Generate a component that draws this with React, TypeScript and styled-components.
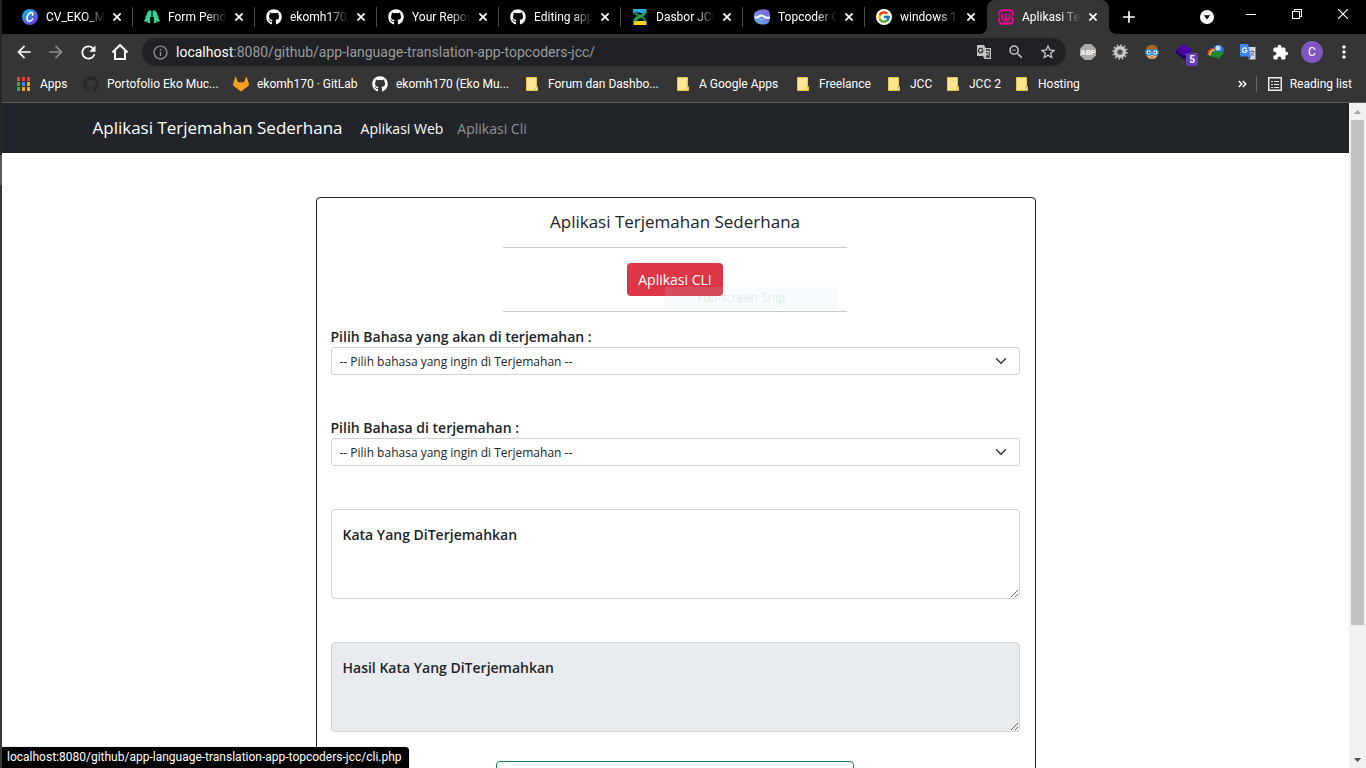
import React from 'react';
import styled, { createGlobalStyle, css } from 'styled-components';
import {
  MdArrowBack,
  MdArrowForward,
  MdRefresh,
  MdInfoOutline,
  MdZoomOut,
  MdStarBorder,
  MdExtension,
  MdMoreVert,
  MdAdd,
} from 'react-icons/md';
import { FaGithub } from 'react-icons/fa';
import { FcGoogle } from 'react-icons/fc';

const pageFont = '"Open Sans", "Noto Sans", sans-serif';
const chromeFont = 'Roboto, "Open Sans", sans-serif';

const GlobalStyle = createGlobalStyle`
  *, *::before, *::after { box-sizing: border-box; }
  html, body { margin: 0; background: #1c1c1c; }
  body { font-family: ${chromeFont}; font-size: 14px; color: #212529; }
  button, select, textarea, input { font-family: inherit; }
`;

/* ---------- window frame ---------- */

const Desktop = styled.div`
  display: flex;
  height: 100vh;
  padding-left: 2px;
  overflow: hidden;
  background: linear-gradient(#262524 0 155px, #5a5a5a 155px 185px, #383838 185px 100%);
`;

const Browser = styled.div`
  position: relative;
  flex: 1;
  min-width: 0;
  display: flex;
  flex-direction: column;
  background: #353535;
`;

const IconButton = styled.button<{ $w?: number; $dim?: boolean }>`
  width: ${(p) => p.$w ?? 32}px;
  flex: none;
  align-self: stretch;
  display: flex;
  align-items: center;
  justify-content: center;
  padding: 0;
  border: 0;
  background: none;
  color: ${(p) => (p.$dim ? '#8c8c8c' : '#fff')};
`;

/* ---------- tab strip ---------- */

const TabStrip = styled.div`
  display: flex;
  height: 34px;
  padding-left: 9px;
  background: #000;
`;

const Tabs = styled.div`
  display: flex;
  flex: 0 1 auto;
  min-width: 0;
`;

const Tab = styled.div<{ $active?: boolean; $divided?: boolean }>`
  position: relative;
  flex: 0 1 122px;
  width: 122px;
  min-width: 0;
  display: flex;
  align-items: center;
  padding: 0 9px 0 11px;
  color: #fff;
  ${(p) =>
    p.$divided &&
    css`
      background: linear-gradient(#4a4a4a, #4a4a4a) right 0 top 7px / 1px 20px no-repeat;
    `}
  ${(p) =>
    p.$active &&
    css`
      background: #353535;
      border-radius: 8px 8px 0 0;
      &::before,
      &::after {
        content: '';
        position: absolute;
        bottom: 0;
        width: 8px;
        height: 8px;
      }
      &::before {
        left: -8px;
        background: radial-gradient(circle at 0 0, transparent 8px, #353535 8px);
      }
      &::after {
        right: -8px;
        background: radial-gradient(circle at 100% 0, transparent 8px, #353535 8px);
      }
    `}
`;

const TabIcon = styled.span`
  flex: none;
  width: 16px;
  height: 16px;
  display: flex;
`;

const TabTitle = styled.span`
  flex: 1;
  min-width: 0;
  margin-left: 8px;
  overflow: hidden;
  white-space: nowrap;
  font-size: 12px;
  line-height: 16px;
  mask-image: linear-gradient(90deg, #000 60%, transparent 92%);
`;

const TabClose = styled.button`
  flex: none;
  width: 14px;
  height: 16px;
  padding: 0;
  border: 0;
  background: none;
  color: #fff;
  display: flex;
  align-items: center;
  justify-content: center;
`;

const Caption = styled.div`
  display: flex;
  margin-left: auto;
`;

const WindowControls = styled.div`
  display: flex;
  height: 28px;
`;

/* ---------- toolbar ---------- */

const Toolbar = styled.div`
  display: flex;
  height: 36px;
  padding: 0 6px;
  align-items: center;
`;

const Omnibox = styled.div`
  flex: 1;
  min-width: 0;
  height: 28px;
  margin: 0 6px;
  padding: 0 2px;
  display: flex;
  align-items: center;
  border-radius: 14px;
  background: #202124;
`;

const Url = styled.div`
  flex: 1;
  min-width: 0;
  overflow: hidden;
  white-space: nowrap;
  font-size: 14px;
  line-height: 20px;
  color: #9a9b9d;
  b {
    font-weight: 400;
    color: #fff;
  }
`;

const Avatar = styled.span`
  width: 22px;
  height: 22px;
  border-radius: 50%;
  background: #7e57c2;
  color: #fff;
  font-size: 12px;
  line-height: 22px;
  text-align: center;
`;

const BadgeHost = styled.span`
  position: relative;
  width: 16px;
  height: 16px;
`;

const Badge = styled.span`
  position: absolute;
  left: 10px;
  top: 9px;
  width: 12px;
  height: 13px;
  border-radius: 2px;
  background: #673ab7;
  color: #fff;
  font-size: 10px;
  font-weight: 700;
  line-height: 13px;
  text-align: center;
`;

const Bookmarks = styled.div`
  display: flex;
  align-items: center;
  height: 33px;
  padding: 0 14px 5px 15px;
  border-bottom: 1px solid #606060;
`;

const Bookmark = styled.a<{ $w: number }>`
  flex: 0 1 ${(p) => p.$w}px;
  min-width: 0;
  display: flex;
  align-items: center;
  gap: 8px;
  overflow: hidden;
  color: #fff;
  font-size: 12px;
  line-height: 16px;
  white-space: nowrap;
  text-decoration: none;
  svg {
    flex: none;
  }
`;

const BookmarkTail = styled.div`
  margin-left: auto;
  display: flex;
  align-items: center;
  color: #fff;
`;

const Overflow = styled.button`
  padding: 0;
  border: 0;
  background: none;
  color: #fff;
  display: flex;
`;

const ReadingList = styled.button`
  display: flex;
  align-items: center;
  gap: 8px;
  height: 16px;
  margin-left: 9px;
  padding: 0 0 0 11px;
  border: 0;
  border-left: 1px solid #6a6a6a;
  background: none;
  color: #fff;
  font-size: 12px;
  line-height: 16px;
  white-space: nowrap;
`;

/* ---------- web page ---------- */

const Viewport = styled.div`
  flex: 1;
  min-height: 0;
  display: flex;
  background: #fff;
  font-family: ${pageFont};
`;

const Page = styled.div`
  flex: 1;
  min-width: 0;
  overflow: hidden;
`;

const Navbar = styled.nav`
  background: #212529;
`;

const NavInner = styled.div`
  display: flex;
  align-items: center;
  max-width: 1188px;
  min-height: 50px;
  margin: 0 auto;
  padding: 0 11px;
`;

const Brand = styled.a`
  margin-right: 11px;
  color: #fff;
  font-size: 17px;
  line-height: 28px;
  text-decoration: none;
  white-space: nowrap;
`;

const NavLink = styled.a<{ $active?: boolean }>`
  padding: 8px 7px 7px;
  color: ${(p) => (p.$active ? '#fff' : '#909294')};
  font-size: 14px;
  line-height: 22px;
  text-decoration: none;
  white-space: nowrap;
`;

const Card = styled.main`
  max-width: 720px;
  margin: 44px auto 0;
  padding: 14px 15px 14px 14px;
  border: 1px solid #212529;
  border-radius: 4px;
`;

const CardHead = styled.header`
  position: relative;
  width: 50%;
  margin: 0 auto;
  display: flex;
  flex-direction: column;
  align-items: center;
`;

const Heading = styled.h1`
  margin: 0;
  font-size: 17px;
  font-weight: 500;
  line-height: 20px;
  white-space: nowrap;
`;

const Rule = styled.hr`
  align-self: stretch;
  height: 1px;
  margin: 15px 0;
  border: 0;
  background: #c8c9ca;
`;

const CliLink = styled.a`
  height: 33px;
  padding: 0 11px;
  border-radius: 4px;
  background: #dc3545;
  color: #fff;
  font-size: 14px;
  line-height: 33px;
  text-decoration: none;
`;

const SnipGhost = styled.div`
  position: absolute;
  right: 9px;
  bottom: 18px;
  width: 173px;
  height: 22px;
  padding-left: 32px;
  background: rgba(190, 225, 250, 0.14);
  color: rgba(110, 80, 80, 0.14);
  font-size: 12px;
  line-height: 22px;
  pointer-events: none;
`;

const Form = styled.form`
  display: flex;
  flex-direction: column;
  gap: 43px;
`;

const Field = styled.div`
  display: flex;
  flex-direction: column;
`;

const Label = styled.label`
  font-size: 14px;
  font-weight: 600;
  line-height: 20px;
`;

const Select = styled.select`
  appearance: none;
  width: 100%;
  height: 28px;
  padding: 0 32px 0 8px;
  border: 1px solid #ced4da;
  border-radius: 3px;
  background: #fff
    url("data:image/svg+xml,%3Csvg xmlns='http://www.w3.org/2000/svg' viewBox='0 0 16 16'%3E%3Cpath fill='none' stroke='%23343a40' stroke-linecap='round' stroke-linejoin='round' stroke-width='2' d='M2 5l6 6 6-6'/%3E%3C/svg%3E")
    right 12px center / 12px 12px no-repeat;
  color: #212529;
  font-size: 12px;
`;

const Floating = styled.div`
  display: grid;
  & > * {
    grid-area: 1 / 1;
  }
  label {
    z-index: 1;
    justify-self: start;
    align-self: start;
    padding: 16px 12px;
    pointer-events: none;
  }
`;

const TextArea = styled.textarea`
  width: 100%;
  height: 90px;
  padding: 14px 11px;
  border: 1px solid #ced4da;
  border-radius: 4px;
  background: #fff;
  font-size: 14px;
  resize: vertical;
  &:disabled {
    background: #e9ecef;
  }
`;

const Submit = styled.button`
  align-self: center;
  width: 52%;
  height: 34px;
  margin-top: -14px;
  border: 1px solid #198754;
  border-radius: 4px;
  background: #fff;
`;

/* ---------- scrollbar and status bubble ---------- */

const Scrollbar = styled.div`
  flex: none;
  width: 17px;
  display: flex;
  flex-direction: column;
  background: #f1f1f1;
`;

const ScrollStep = styled.button<{ $up?: boolean }>`
  height: 17px;
  padding: 0;
  border: 0;
  background: none;
  display: flex;
  align-items: center;
  justify-content: center;
  color: ${(p) => (p.$up ? '#a3a3a3' : '#505050')};
`;

const ScrollTrack = styled.div`
  flex: 1;
  padding: 0 2px;
`;

const ScrollThumb = styled.div`
  height: 80%;
  background: #c1c1c1;
`;

const StatusBubble = styled.div`
  position: absolute;
  left: 0;
  bottom: 0;
  height: 21px;
  padding: 0 7px 0 5px;
  border-radius: 0 4px 0 0;
  box-shadow: 0 0 1px #777;
  background: #000;
  color: #fff;
  font-size: 12px;
  line-height: 21px;
  white-space: nowrap;
`;

/* ---------- drawings ---------- */

const CanvaIcon = () => (
  <svg width="16" height="16" viewBox="0 0 16 16">
    <defs>
      <linearGradient id="canva" x1="0" y1="0" x2="0.8" y2="1">
        <stop offset="0" stopColor="#00c4cc" />
        <stop offset="0.55" stopColor="#3f7be0" />
        <stop offset="1" stopColor="#7d2ae8" />
      </linearGradient>
    </defs>
    <circle cx="8" cy="8" r="8" fill="url(#canva)" />
    <path d="M10.4 6.300c.9-1 .5-2.700-1-2.700C7 3.600 5 6.700 5 9.200c0 1.900 1 3 2.400 3 1.400 0 2.700-1 3.300-2.300" fill="none" stroke="#fff" strokeWidth="1.500" strokeLinecap="round" />
  </svg>
);

const FormIcon = () => (
  <svg width="16" height="16" viewBox="0 0 16 16" fill="#35d894">
    <path d="M5 1.500h2.400V8.500L6 8v6H3.600v-2.500L2.500 13 0 12l2-3.300L1 8.500 3 5.500 2.300 5z" />
    <path d="M11 1.500H8.600V8.500L10 8v6h2.400v-2.500l1.100 1.500 2.500-1-2-3.300 1-.2-2-3 .7-.5z" />
  </svg>
);

const DigitalentIcon = () => (
  <svg width="16" height="16" viewBox="0 0 16 16">
    <path d="M1 0h13.500v4.500H10l-2-1H4L1 4.500z" fill="#25a9e0" />
    <path d="M1.500 16h13v-4.500L12 12H6l-4.500-.5z" fill="#ffd21f" />
    <path d="M1.200 3.500C2 6 5 7 7 8s4.500 1.500 5.500 4.500h2c0-3.500-3-5-5-6S5 4.500 4.300 3z" fill="#0d7f5c" />
    <path d="M14.500 3.500c-1 3-3.500 4-5.500 5S5 10.500 4.500 12.500h-3c0-3.500 2.500-4.800 4.500-5.800s5-1.900 6-3.700z" fill="#1aa35a" />
  </svg>
);

const TopcoderIcon = () => (
  <svg width="16" height="16" viewBox="0 0 16 16">
    <defs>
      <linearGradient id="tc" x1="1" y1="0" x2="0" y2="1">
        <stop offset="0" stopColor="#8a5bd6" />
        <stop offset="1" stopColor="#5fb4f0" />
      </linearGradient>
    </defs>
    <path d="M2 2.500C6 .5 10-.5 14 1.200c1.500.8 2 3 2 6 0 3.500-.8 6.300-2.300 7.300-2.500 1.300-7 1.500-10.700-.5C.8 12.500 0 10 0 7.500 0 5 .3 3.500 2 2.500z" fill="url(#tc)" />
    <path d="M.5 8.500h2c2 0 2.500-2 5-2s3.500 2.300 5.500 2.300H16" fill="none" stroke="#fff" strokeWidth="2" />
    <path d="M4 9.500c2 0 2.200 1.300 4 1.300s2-1.300 4-1.300" fill="none" stroke="#fff" strokeWidth=".6" opacity=".6" />
  </svg>
);

const GoogleIcon = () => (
  <svg width="16" height="16" viewBox="0 0 16 16">
    <circle cx="8" cy="8" r="8" fill="#fff" />
    <FcGoogle x="1" y="1" size={14} />
  </svg>
);

const WampIcon = () => (
  <svg width="16" height="16" viewBox="0 0 16 16" fill="none" stroke="#f70094">
    <path d="M4.500 1.200h7c1.800 0 3.300 1.500 3.300 3.300v2M14.800 9v2.500c0 1.800-1.500 3.300-3.300 3.300h-7c-1.800 0-3.300-1.500-3.300-3.300V9M1.200 6.500v-2c0-1.800 1.500-3.300 3.300-3.300" strokeWidth="2" />
    <path d="M4.500 4.500v4c0 1.500.7 2.500 1.800 2.500S8 10 8 8.500v-4 4C8 10 8.600 11 9.700 11s1.800-1 1.800-2.500v-4" strokeWidth="1.600" />
    <path d="M1 8h2.500M12.500 8H15M5.500 13h5" strokeWidth="1.200" />
  </svg>
);

const GitlabIcon = () => (
  <svg width="16" height="16" viewBox="0 0 16 16">
    <path d="M8 15.500L.4 9.800 0 8.200 2.400.8h.5L5 6.600h6L13.100.8h.5L16 8.200l-.4 1.600z" fill="#fca326" />
    <path d="M8 15.500L5 6.600h6z" fill="#f5a020" />
    <path d="M8 15.500L1 6.600h1.400zM8 15.500l7-8.900h-1.400z" fill="#e88a10" />
  </svg>
);

const AppsIcon = () => (
  <svg width="15" height="16" viewBox="0 0 15 16" shapeRendering="crispEdges">
    {['#ea4335', '#ea4335', '#ea4335', '#34a853', '#4285f4', '#fbab05', '#34a853', '#fbab05', '#fbab05'].map((c, i) => (
      <rect key={i} x={(i % 3) * 5} y={1 + Math.floor(i / 3) * 5} width="3" height="4" fill={c} />
    ))}
  </svg>
);

const FolderIcon = () => (
  <svg width="14" height="16" viewBox="0 0 14 16">
    <path d="M.5 1.500h10v9h1v4H.5z" fill="#ffe690" stroke="#e9c34c" />
    <path d="M9.500 14.500v-3h1.500" fill="none" stroke="#e9c34c" />
  </svg>
);

const HomeIcon = () => (
  <svg width="18" height="18" viewBox="0 0 18 18" fill="none" stroke="#fff" strokeWidth="2">
    <path d="M1.500 9.500L9 2l7.500 7.500M4 8v8h10V8" />
  </svg>
);

const CloseIcon = () => (
  <svg width="8" height="8" viewBox="0 0 8 8" stroke="#fff" strokeWidth="1.700">
    <path d="M.4.4l7.200 7.200M7.600.4L.4 7.600" />
  </svg>
);

const TranslatePageIcon = () => (
  <svg width="16" height="16" viewBox="0 0 16 16">
    <path d="M1 1h7l1.500 3H15v11H8.500L7 12H1z" fill="#c4c5c7" />
    <path d="M9.800 5.200h4v8.600H9.500l1-1.800z" fill="#303134" />
    <path d="M6.800 5.500A2.300 2.300 0 1 0 7 7H5" fill="none" stroke="#202124" strokeWidth="1.100" />
    <path d="M9.500 7.500h4M11.500 6.500v1M13 7.700c-.5 1.600-1.500 2.600-3 3.500M10.500 9c.7 1 1.500 1.800 2.800 2.400" fill="none" stroke="#c4c5c7" />
  </svg>
);

const AbpIcon = () => (
  <svg width="16" height="16" viewBox="0 0 16 16">
    <path d="M4.700 0h6.600L16 4.700v6.600L11.300 16H4.700L0 11.300V4.700z" fill="#a9a9a9" />
    <text x="8" y="10.500" fill="#fff" fontSize="7" fontWeight="700" textAnchor="middle" fontFamily="Liberation Sans, sans-serif">
      ABP
    </text>
  </svg>
);

const GearIcon = () => (
  <svg width="16" height="16" viewBox="0 0 16 16">
    <circle cx="8" cy="8" r="6.600" fill="none" stroke="#b5b5b5" strokeWidth="2.400" strokeDasharray="1.700 1.756" />
    <circle cx="8" cy="8" r="4.300" fill="none" stroke="#c9c9c9" strokeWidth="3.400" />
    <circle cx="8" cy="8" r="2.300" fill="#555" />
  </svg>
);

const OwlIcon = () => (
  <svg width="16" height="16" viewBox="0 0 16 16">
    <path d="M2 6C2 3 4.500 1 8 1s6 2 6 5l.8 3.500H1.200z" fill="#a8641d" />
    <path d="M2.500 7h11v4.500C12.500 14 10.500 15 8 15s-4.500-1-5.500-3.500z" fill="#f2b07e" />
    <circle cx="4.600" cy="8.400" r="2.700" fill="#fff" stroke="#1d8fe0" strokeWidth="1.300" />
    <circle cx="11.400" cy="8.400" r="2.700" fill="#fff" stroke="#1d8fe0" strokeWidth="1.300" />
    <circle cx="4.800" cy="8.400" r=".9" fill="#123" />
    <circle cx="11.200" cy="8.400" r=".9" fill="#123" />
    <path d="M6.500 13h3" stroke="#a84a2a" />
  </svg>
);

const LayersIcon = () => (
  <svg width="16" height="16" viewBox="0 0 16 16">
    <path d="M0 9l8 6.500L14 11V6L0 6z" fill="#22006e" />
    <path d="M8 0l8 6-8 6.200L0 6z" fill="#4b00a8" />
  </svg>
);

const IdmIcon = () => (
  <svg width="18" height="16" viewBox="0 0 18 16">
    <circle cx="11.500" cy="6" r="5.300" fill="#2f76d2" />
    <circle cx="11" cy="4" r="2.600" fill="#bfe0fa" />
    <path d="M1.500 11c-1-4 2.500-7 6-6.500" fill="none" stroke="#e0452c" strokeWidth="1.600" />
    <path d="M3 11.500c-.5-3 1.500-5.500 4.500-5.300" fill="none" stroke="#f6d22c" strokeWidth="1.800" />
    <path d="M4 12.500c-.8-2.500 1-4.500 4-4.300V6.500l9 2.500-6.500 6.500-.5-2.700c-2 .7-5 .8-6-.3z" fill="#1f8f2c" />
  </svg>
);

const GTranslateIcon = () => (
  <svg width="16" height="16" viewBox="0 0 16 16">
    <path d="M6 3h9.500v12.500H9z" fill="#d4d7dc" />
    <path d="M9.500 7.500h5M12 6.500v1M14 7.700c-.5 1.600-1.500 3-3.500 4.200M11 9c.7 1.200 1.700 2 3 2.600" fill="none" stroke="#5f7786" />
    <path d="M0 0h8l3 12.500H0z" fill="#4285f4" />
    <path d="M7.500 12.500H11L9.300 15.500z" fill="#2a56c6" />
    <path d="M6.600 4.900A2.300 2.300 0 1 0 7 6.500H4.900" fill="none" stroke="#fff" strokeWidth="1.100" />
  </svg>
);

const TabSearchIcon = () => (
  <svg width="14" height="14" viewBox="0 0 14 14">
    <circle cx="7" cy="7" r="7" fill="#fff" />
    <path d="M3.800 5.200h6.400L7 9.600z" fill="#000" />
  </svg>
);

const MinimizeIcon = () => (
  <svg width="10" height="10" viewBox="0 0 10 10" shapeRendering="crispEdges">
    <path d="M0 5.500h10" stroke="#fff" />
  </svg>
);

const RestoreIcon = () => (
  <svg width="10" height="10" viewBox="0 0 10 10" fill="none" stroke="#fff" shapeRendering="crispEdges">
    <path d="M.5 2.500h7v7h-7zM2.500 2.500v-2h7v7h-2" />
  </svg>
);

const CloseWindowIcon = () => (
  <svg width="10" height="10" viewBox="0 0 10 10" stroke="#fff" strokeWidth="1.100">
    <path d="M0 0l10 10M10 0L0 10" />
  </svg>
);

const ChevronsIcon = () => (
  <svg width="9" height="8" viewBox="0 0 9 8" fill="none" stroke="#fff" strokeWidth="1.500">
    <path d="M.8 1l3 3-3 3M4.800 1l3 3-3 3" />
  </svg>
);

const ReadingListIcon = () => (
  <svg width="14" height="14" viewBox="0 0 14 14" fill="none" stroke="#e8e8e8">
    <rect x=".75" y=".75" width="12.500" height="12.500" strokeWidth="1.500" />
    <path d="M3 4.500h2M6 4.500h5M3 7.500h2M6 7.500h5M3 10.500h2M6 10.500h5" />
  </svg>
);

const ScrollArrow = ({ up }: { up?: boolean }) => (
  <svg width="7" height="4" viewBox="0 0 7 4" fill="currentColor">
    <path d={up ? 'M0 4l3.500-4L7 4z' : 'M0 0l3.500 4L7 0z'} />
  </svg>
);

/* ---------- data ---------- */

const tabs = [
  { title: 'CV_EKO_M', icon: <CanvaIcon /> },
  { title: 'Form Pend', icon: <FormIcon /> },
  { title: 'ekomh170/', icon: <FaGithub size={16} /> },
  { title: 'Your Repos', icon: <FaGithub size={16} /> },
  { title: 'Editing app', icon: <FaGithub size={16} /> },
  { title: 'Dasbor JCC', icon: <DigitalentIcon /> },
  { title: 'Topcoder C', icon: <TopcoderIcon /> },
  { title: 'windows 1', icon: <GoogleIcon /> },
  { title: 'Aplikasi Te', icon: <WampIcon /> },
];

const bookmarks = [
  { title: 'Apps', w: 66, icon: <AppsIcon /> },
  { title: 'Portofolio Eko Muc...', w: 150, icon: <FaGithub size={16} color="#24292e" /> },
  { title: 'ekomh170 · GitLab', w: 139, icon: <GitlabIcon /> },
  { title: 'ekomh170 (Eko Mu...', w: 154, icon: <FaGithub size={16} /> },
  { title: 'Forum dan Dashbo...', w: 151, icon: <FolderIcon /> },
  { title: 'A Google Apps', w: 120, icon: <FolderIcon /> },
  { title: 'Freelance', w: 91, icon: <FolderIcon /> },
  { title: 'JCC', w: 59, icon: <FolderIcon /> },
  { title: 'JCC 2', w: 69, icon: <FolderIcon /> },
  { title: 'Hosting', w: 70, icon: <FolderIcon /> },
];

const extensions = [
  { name: 'Adblock Plus', icon: <AbpIcon /> },
  { name: 'Settings', icon: <GearIcon /> },
  { name: 'Owl', icon: <OwlIcon /> },
  {
    name: 'Layers',
    icon: (
      <BadgeHost>
        <LayersIcon />
        <Badge>5</Badge>
      </BadgeHost>
    ),
  },
  { name: 'Download manager', icon: <IdmIcon /> },
  { name: 'Google Translate', icon: <GTranslateIcon /> },
  { name: 'Extensions', icon: <MdExtension size={17} /> },
  { name: 'Profile', icon: <Avatar>C</Avatar> },
  { name: 'Menu', icon: <MdMoreVert size={20} /> },
];

/* ---------- app ---------- */

export default function App() {
  return (
    <>
      <GlobalStyle />
      <Desktop>
        <Browser>
          <TabStrip>
            <Tabs>
              {tabs.map((t, i) => (
                <Tab key={t.title} $active={i === tabs.length - 1} $divided={i < tabs.length - 2}>
                  <TabIcon>{t.icon}</TabIcon>
                  <TabTitle>{t.title}</TabTitle>
                  <TabClose aria-label="Close tab"><CloseIcon /></TabClose>
                </Tab>
              ))}
            </Tabs>
            <IconButton $w={40} aria-label="New tab"><MdAdd size={20} /></IconButton>
            <Caption>
              <IconButton $w={42} aria-label="Search tabs"><TabSearchIcon /></IconButton>
              <WindowControls>
                <IconButton $w={46} aria-label="Minimize"><MinimizeIcon /></IconButton>
                <IconButton $w={46} aria-label="Restore"><RestoreIcon /></IconButton>
                <IconButton $w={46} aria-label="Close"><CloseWindowIcon /></IconButton>
              </WindowControls>
            </Caption>
          </TabStrip>

          <Toolbar>
            <IconButton aria-label="Back"><MdArrowBack size={20} /></IconButton>
            <IconButton aria-label="Forward" $dim><MdArrowForward size={20} /></IconButton>
            <IconButton aria-label="Reload"><MdRefresh size={21} /></IconButton>
            <IconButton aria-label="Home"><HomeIcon /></IconButton>
            <Omnibox>
              <IconButton aria-label="Site information" $dim><MdInfoOutline size={17} /></IconButton>
              <Url><b>localhost</b>:8080/github/app-language-translation-app-topcoders-jcc/</Url>
              <IconButton aria-label="Translate this page"><TranslatePageIcon /></IconButton>
              <IconButton aria-label="Zoom"><MdZoomOut size={18} color="#c4c5c7" /></IconButton>
              <IconButton aria-label="Bookmark this page"><MdStarBorder size={18} color="#d0d1d3" /></IconButton>
            </Omnibox>
            {extensions.map((e) => (
              <IconButton key={e.name} aria-label={e.name}>{e.icon}</IconButton>
            ))}
          </Toolbar>

          <Bookmarks>
            {bookmarks.map((b) => (
              <Bookmark key={b.title} href="#" $w={b.w}>
                {b.icon}
                {b.title}
              </Bookmark>
            ))}
            <BookmarkTail>
              <Overflow aria-label="More bookmarks"><ChevronsIcon /></Overflow>
              <ReadingList><ReadingListIcon />Reading list</ReadingList>
            </BookmarkTail>
          </Bookmarks>

          <Viewport>
            <Page>
              <Navbar>
                <NavInner>
                  <Brand href="#">Aplikasi Terjemahan Sederhana</Brand>
                  <NavLink href="#" $active>Aplikasi Web</NavLink>
                  <NavLink href="#">Aplikasi Cli</NavLink>
                </NavInner>
              </Navbar>
              <Card>
                <CardHead>
                  <Heading>Aplikasi Terjemahan Sederhana</Heading>
                  <Rule />
                  <CliLink href="#">Aplikasi CLI</CliLink>
                  <Rule />
                  <SnipGhost>Full-screen Snip</SnipGhost>
                </CardHead>
                <Form>
                  <Field>
                    <Label htmlFor="from">Pilih Bahasa yang akan di terjemahan :</Label>
                    <Select id="from">
                      <option>-- Pilih bahasa yang ingin di Terjemahan --</option>
                    </Select>
                  </Field>
                  <Field>
                    <Label htmlFor="to">Pilih Bahasa di terjemahan :</Label>
                    <Select id="to">
                      <option>-- Pilih bahasa yang ingin di Terjemahan --</option>
                    </Select>
                  </Field>
                  <Floating>
                    <TextArea id="source" />
                    <Label htmlFor="source">Kata Yang DiTerjemahkan</Label>
                  </Floating>
                  <Floating>
                    <TextArea id="result" disabled />
                    <Label htmlFor="result">Hasil Kata Yang DiTerjemahkan</Label>
                  </Floating>
                  <Submit type="button" aria-label="Terjemahkan" />
                </Form>
              </Card>
            </Page>
            <Scrollbar>
              <ScrollStep $up aria-label="Scroll up"><ScrollArrow up /></ScrollStep>
              <ScrollTrack><ScrollThumb /></ScrollTrack>
              <ScrollStep aria-label="Scroll down"><ScrollArrow /></ScrollStep>
            </Scrollbar>
          </Viewport>

          <StatusBubble>localhost:8080/github/app-language-translation-app-topcoders-jcc/cli.php</StatusBubble>
        </Browser>
      </Desktop>
    </>
  );
}
